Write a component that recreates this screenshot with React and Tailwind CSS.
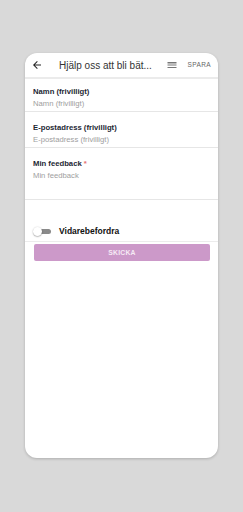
function Field({ label, placeholder, required, h, pt }) {
  return (
    <div className={`border-b border-[#e6e6e6] px-[8px] ${h} ${pt}`}>
      <div className="text-[7.7px] font-bold text-[#1d2733] leading-[10px]">
        {label}
        {required && <span className="text-[#e57373]"> *</span>}
      </div>
      <div className="text-[7.7px] text-[#9e9e9e] leading-[10px] mt-[2px]">{placeholder}</div>
    </div>
  )
}

export default function App() {
  return (
    <div className="w-[243px] h-[512px] bg-[#d9d9d9] pt-[53px] pl-[25px] font-['Liberation_Sans',Arial,sans-serif]">
      <div className="w-[193px] h-[405px] bg-white rounded-[12px] shadow-[0_1px_3px_rgba(0,0,0,0.2)] overflow-hidden">
        <header className="h-[26px] flex items-center pl-[6px] pr-[7px] border-b-[2px] border-[#ebebeb]">
          <svg width="12" height="12" viewBox="0 0 24 24" className="shrink-0">
            <path d="M20 11H7.83l5.59-5.59L12 4l-8 8 8 8 1.41-1.41L7.83 13H20v-2z" fill="#222" />
          </svg>
          <span className="ml-[16px] text-[10px] text-[#333] whitespace-nowrap">Hjälp oss att bli bät...</span>
          <svg width="12" height="12" viewBox="0 0 24 24" className="ml-[14px] shrink-0">
            <path d="M3 18h18v-2H3v2zm0-5h18v-2H3v2zm0-6v2h18V6H3z" fill="#777" />
          </svg>
          <span className="ml-auto text-[6.5px] tracking-[0.4px] text-[#666]">SPARA</span>
        </header>
        <Field label="Namn (frivilligt)" placeholder="Namn (frivilligt)" h="h-[33px]" pt="pt-[8px]" />
        <Field label="E-postadress (frivilligt)" placeholder="E-postadress (frivilligt)" h="h-[36px]" pt="pt-[11px]" />
        <Field label="Min feedback" placeholder="Min feedback" required h="h-[52px]" pt="pt-[11px]" />
        <div className="h-[42px] border-b border-[#ececec] flex items-end pb-[4px] px-[8px]">
          <div className="relative w-[18px] h-[12px] flex items-center shrink-0">
            <div className="w-[14px] h-[5px] ml-[4px] rounded-full bg-[#8a8a8a]" />
            <div className="absolute left-0 w-[9px] h-[9px] rounded-full bg-white shadow-[0_0.5px_1.5px_rgba(0,0,0,0.45)]" />
          </div>
          <span className="ml-[8px] text-[8.5px] font-bold text-[#111] leading-[12px]">Vidarebefordra</span>
        </div>
        <div className="pl-[9px] pr-[8px] pt-[2px]">
          <button className="block w-full h-[17px] rounded-[2px] bg-[#cc99c9] text-[#f6eaf5] text-[6.8px] font-bold tracking-[0.2px] leading-[17px]">
            SKICKA
          </button>
        </div>
      </div>
    </div>
  )
}
